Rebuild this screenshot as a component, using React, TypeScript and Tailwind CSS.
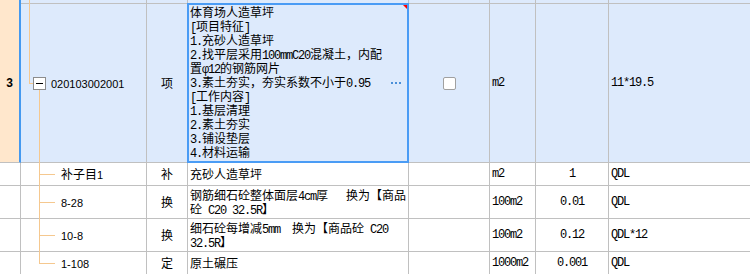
import React from "react";

const GRID = "grid grid-cols-[21px_126px_41px_221px_81px_46px_73px_141px]";
const C = "border-r border-b border-[#c0c0c0]";
const CL = "border-b border-[#c0c0c0]";
const BLUE = "bg-[#ddeafc]";
const ORANGE = "bg-[#ffe7cc]";
const TREE = "bg-[#f5c88f]";

function M({ s }: { s: string }) {
  const parts = s.match(/[\x20-\x7eφ]+|[^\x20-\x7eφ]+/g) || [];
  return (
    <>
      {parts.map((p, i) =>
        /^[\x20-\x7eφ]/.test(p) ? (
          <span
            key={i}
            className="font-['Liberation_Mono',monospace] text-[12px] leading-none tracking-[-1.2px] whitespace-pre"
          >
            {p}
          </span>
        ) : (
          <span key={i} className="whitespace-pre">
            {p}
          </span>
        )
      )}
    </>
  );
}

function Code({ s }: { s: string }) {
  const parts = s.match(/[\x20-\x7e]+|[^\x20-\x7e]+/g) || [];
  return (
    <>
      {parts.map((p, i) =>
        /^[\x20-\x7e]/.test(p) ? (
          <span key={i} className="font-['Liberation_Sans',sans-serif] text-[11px] leading-none">
            {p}
          </span>
        ) : (
          <span key={i}>{p}</span>
        )
      )}
    </>
  );
}

const mainLines = [
  "体育场人造草坪",
  "[项目特征]",
  "1.充砂人造草坪",
  "2.找平层采用100mmC20混凝土，内配",
  "置φ12的钢筋网片",
  "3.素土夯实，夯实系数不小于0.95",
  "[工作内容]",
  "1.基层清理",
  "2.素土夯实",
  "3.铺设垫层",
  "4.材料运输",
];

type Sub = {
  h: string;
  code: string;
  type: string;
  lines: string[];
  unit: string;
  qty: string;
  expr: string;
  last?: boolean;
};

const subs: Sub[] = [
  { h: "h-[23px]", code: "补子目1", type: "补", lines: ["充砂人造草坪"], unit: "m2", qty: "1", expr: "QDL" },
  {
    h: "h-[33px]",
    code: "8-28",
    type: "换",
    lines: ["钢筋细石砼整体面层4cm厚   换为【商品", "砼 C20 32.5R】"],
    unit: "100m2",
    qty: "0.01",
    expr: "QDL",
  },
  {
    h: "h-[33px]",
    code: "10-8",
    type: "换",
    lines: ["细石砼每增减5mm  换为【商品砼 C20", "32.5R】"],
    unit: "100m2",
    qty: "0.12",
    expr: "QDL*12",
  },
  { h: "h-[22px]", code: "1-108", type: "定", lines: ["原土碾压"], unit: "1000m2", qty: "0.001", expr: "QDL", last: true },
];

function SubRow({ r }: { r: Sub }) {
  const b = r.last ? "border-r border-[#c0c0c0]" : C;
  const bl = r.last ? "" : CL;
  return (
    <div className={`${GRID} ${r.h} bg-white`}>
      <div className={b}></div>
      <div className={`${b} relative flex items-center pl-[40px]`}>
        <div className={`absolute left-[18px] top-0 w-px ${TREE} ${r.last ? "h-1/2" : "-bottom-px"}`}></div>
        <div className={`absolute left-[18px] top-1/2 w-[16px] h-px ${TREE}`}></div>
        <span>
          <Code s={r.code} />
        </span>
      </div>
      <div className={`${b} flex items-center justify-center`}>{r.type}</div>
      <div className={`${b} flex flex-col justify-center pl-[2px]`}>
        {r.lines.map((l, i) => (
          <div key={i} className="h-[14px] whitespace-pre">
            <M s={l} />
          </div>
        ))}
      </div>
      <div className={b}></div>
      <div className={`${b} flex items-center pl-[2px]`}>
        <M s={r.unit} />
      </div>
      <div className={`${b} flex items-center justify-center`}>
        <M s={r.qty} />
      </div>
      <div className={`${bl} flex items-center pl-[2px]`}>
        <M s={r.expr} />
      </div>
    </div>
  );
}

export default function App() {
  return (
    <div className="w-[750px] h-[274px] overflow-hidden bg-white text-black font-['Noto_Sans_CJK_SC',sans-serif] text-[12px] leading-[14px]">
      {/* top strip of previous row */}
      <div className={`${GRID} h-[4px] ${BLUE}`}>
        <div className={`${ORANGE} border-r-2 border-[#4499f0]`}></div>
        <div className={`${C} relative`}>
          <div className={`absolute left-[8px] top-0 -bottom-px w-px ${TREE}`}></div>
        </div>
        <div className={C}></div>
        <div className={C}></div>
        <div className={C}></div>
        <div className={C}></div>
        <div className={C}></div>
        <div className={CL}></div>
      </div>

      {/* main row */}
      <div className={`${GRID} h-[159px] ${BLUE}`}>
        <div className={`${ORANGE} border-r-2 border-r-[#4499f0] border-b border-b-[#c0c0c0] flex items-center justify-center font-['Liberation_Sans',sans-serif] font-bold text-[12px]`}>
          3
        </div>
        <div className={`${C} relative flex items-center pl-[12px]`}>
          <div className={`absolute left-[8px] top-0 h-1/2 w-px ${TREE}`}></div>
          <div className={`absolute left-[8px] top-1/2 w-[4px] h-px ${TREE}`}></div>
          <div className={`absolute left-[18px] top-1/2 mt-[7px] -bottom-px w-px ${TREE}`}></div>
          <div className="relative w-[13px] h-[13px] border border-[#8c8c8c] bg-white flex items-center justify-center">
            <div className="w-[7px] h-px bg-black"></div>
          </div>
          <span className="ml-[5px]">
            <Code s="020103002001" />
          </span>
        </div>
        <div className={`${C} flex items-center justify-center`}>项</div>
        <div className={`${C} relative pl-[2px] pt-[1px]`}>
          {mainLines.map((l, i) => (
            <div key={i} className="h-[14px] whitespace-pre">
              <M s={l} />
            </div>
          ))}
          <div className="absolute -inset-px border-2 border-[#4a9cf5]">
            <div className="absolute top-0 right-0 w-0 h-0 border-t-[4px] border-l-[4px] border-t-[#ff0000] border-l-transparent"></div>
            <div className="absolute right-[6px] top-1/2 -translate-y-1/2 flex gap-[2px]">
              <div className="w-[2px] h-[2px] bg-[#4a8fd8]"></div>
              <div className="w-[2px] h-[2px] bg-[#4a8fd8]"></div>
              <div className="w-[2px] h-[2px] bg-[#4a8fd8]"></div>
            </div>
          </div>
        </div>
        <div className={`${C} flex items-center justify-center`}>
          <div className="w-[13px] h-[13px] border border-[#a0a0a0] rounded-[2px] bg-white"></div>
        </div>
        <div className={`${C} flex items-center pl-[2px]`}>
          <M s="m2" />
        </div>
        <div className={C}></div>
        <div className={`${CL} flex items-center pl-[2px]`}>
          <M s="11*19.5" />
        </div>
      </div>

      {subs.map((r, i) => (
        <SubRow key={i} r={r} />
      ))}
    </div>
  );
}
